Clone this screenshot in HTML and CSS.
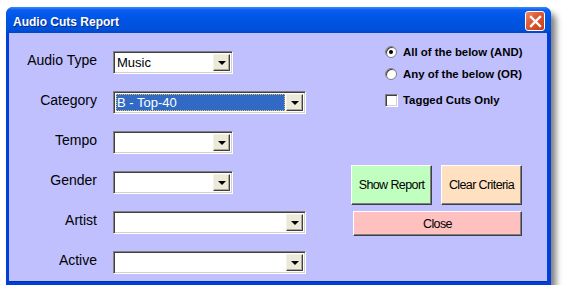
FILE: index.html
```html
<!DOCTYPE html>
<html lang="en">
<head>
	<meta charset="UTF-8">
	<title>Audio Cuts Report</title>
	<link rel="stylesheet" href="styles.css">
</head>
<body>
	<div class="window">
		<div class="titlebar">
			<span class="title">Audio Cuts Report</span>
			<div class="closebox">
				<svg width="13" height="13" viewBox="0 0 13 13"><path d="M2 2 L11 11 M11 2 L2 11" stroke="#fff" stroke-width="2.4" stroke-linecap="square"/></svg>
			</div>
		</div>
		<div class="client">
			<div class="form">
				<label>Audio Type</label>
				<div class="combo short"><span class="value">Music</span><span class="drop"></span></div>
				<label>Category</label>
				<div class="combo long focused"><span class="value">B - Top-40</span><span class="drop"></span></div>
				<label>Tempo</label>
				<div class="combo short"><span class="value"></span><span class="drop"></span></div>
				<label>Gender</label>
				<div class="combo short"><span class="value"></span><span class="drop"></span></div>
				<label>Artist</label>
				<div class="combo long"><span class="value"></span><span class="drop"></span></div>
				<label>Active</label>
				<div class="combo long"><span class="value"></span><span class="drop"></span></div>
			</div>
			<div class="side">
				<div class="options">
					<div class="opt"><span class="radio checked"></span>All of the below (AND)</div>
					<div class="opt"><span class="radio"></span>Any of the below (OR)</div>
					<div class="opt check-row"><span class="check"></span>Tagged Cuts Only</div>
				</div>
				<div class="buttons">
					<div class="btn green">Show Report</div>
					<div class="btn peach">Clear Criteria</div>
				</div>
				<div class="btn pink wide">Close</div>
			</div>
		</div>
	</div>
</body>
</html>
```

FILE: styles.css
```css
* {
	margin:0;
	padding:0;
	box-sizing:border-box;
}
body {
	background:#fff;
	font-family:"Liberation Sans", Arial, sans-serif;
}
.window {
	margin:7px 0 0 6px;
	width:545px;
	height:278px;
	background:#0040d8;
	border-radius:7px 7px 0 0;
	box-shadow:5px 6px 6px rgba(0,0,0,0.5);
	display:flex;
	flex-direction:column;
}
.titlebar {
	height:26px;
	border-radius:7px 7px 0 0;
	background:linear-gradient(#3c8cf6 0, #0a5ef0 3px, #0058ea 8px, #0054e3 50%, #0052dc 85%, #0046c4 100%);
	display:flex;
	align-items:center;
	padding:0 6px 0 7px;
}
.title {
	flex:1;
	color:#fff;
	font-weight:bold;
	font-size:12px;
	padding-top:4px;
	text-shadow:1px 1px 0 #0a2a8a;
}
.closebox {
	width:20px;
	height:20px;
	margin-top:2px;
	border:1px solid #fff;
	border-radius:3px;
	background:linear-gradient(135deg, #f08a6a 0, #e05a32 40%, #c83c14 100%);
	display:flex;
	align-items:center;
	justify-content:center;
}
.client {
	flex:1;
	margin:0 4px 3px 3px;
	background:#c0c0ff;
	display:flex;
	border-bottom:1px solid #0030a8;
}
.form {
	width:297px;
	padding-top:18px;
	display:grid;
	grid-template-columns:88px auto;
	column-gap:16px;
	row-gap:17px;
	align-content:start;
	justify-items:start;
}
.form label {
	justify-self:end;
	font-size:14px;
	line-height:18px;
	color:#000;
}
.combo {
	height:23px;
	background:#fff;
	border:1px solid;
	border-color:#808080 #fff #fff #808080;
	box-shadow:inset 1px 1px 0 #404040, inset -1px -1px 0 #d4d0c8;
	display:flex;
	padding:2px;
}
.combo.short {
	width:120px;
}
.combo.long {
	width:193px;
}
.value {
	flex:1;
	font-size:13px;
	line-height:17px;
	padding-left:1px;
	color:#000;
}
.focused .value {
	margin:0 1px 0 0;
	background:#316ac5;
	color:#fff;
	outline:1px dotted #e8c060;
	outline-offset:-1px;
}
.drop {
	width:17px;
	background:#ece9d8;
	border:1px solid;
	border-color:#f4f2e8 #404040 #404040 #f4f2e8;
	box-shadow:inset -1px -1px 0 #aca899;
	display:flex;
	align-items:center;
	justify-content:center;
}
.drop::after {
	content:"";
	border-left:4px solid transparent;
	border-right:4px solid transparent;
	border-top:4px solid #000;
	margin-top:1px;
}
.side {
	padding:8px 0 0 45px;
	display:flex;
	flex-direction:column;
}
.options {
	padding-left:34px;
}
.opt {
	height:22px;
	display:flex;
	align-items:center;
	font-size:11.4px;
	font-weight:bold;
	color:#000;
}
.check-row {
	margin-top:4px;
}
.radio {
	width:12px;
	height:12px;
	border-radius:50%;
	background:#fff;
	border:1px solid #808080;
	box-shadow:inset 1px 1px 0 #404040;
	margin-right:6px;
	display:flex;
	align-items:center;
	justify-content:center;
}
.radio.checked::after {
	content:"";
	width:4px;
	height:4px;
	border-radius:50%;
	background:#000;
}
.check {
	width:13px;
	height:13px;
	background:#fff;
	border:1px solid;
	border-color:#808080 #fff #fff #808080;
	box-shadow:inset 1px 1px 0 #404040, inset -1px -1px 0 #d4d0c8;
	margin-right:5px;
}
.buttons {
	margin-top:54px;
	display:flex;
	gap:9px;
}
.btn {
	width:81px;
	height:40px;
	display:flex;
	align-items:center;
	justify-content:center;
	font-size:12.5px;
	letter-spacing:-0.6px;
	color:#000;
	border:1px solid;
	border-color:#fff #404040 #404040 #fff;
	box-shadow:inset -1px -1px 0 #808080;
}
.green {
	background:#c0ffc0;
}
.peach {
	background:#ffe0c0;
}
.pink {
	background:#ffc0c0;
}
.btn.wide {
	width:169px;
	height:25px;
	margin:6px 0 0 2px;
}
```
